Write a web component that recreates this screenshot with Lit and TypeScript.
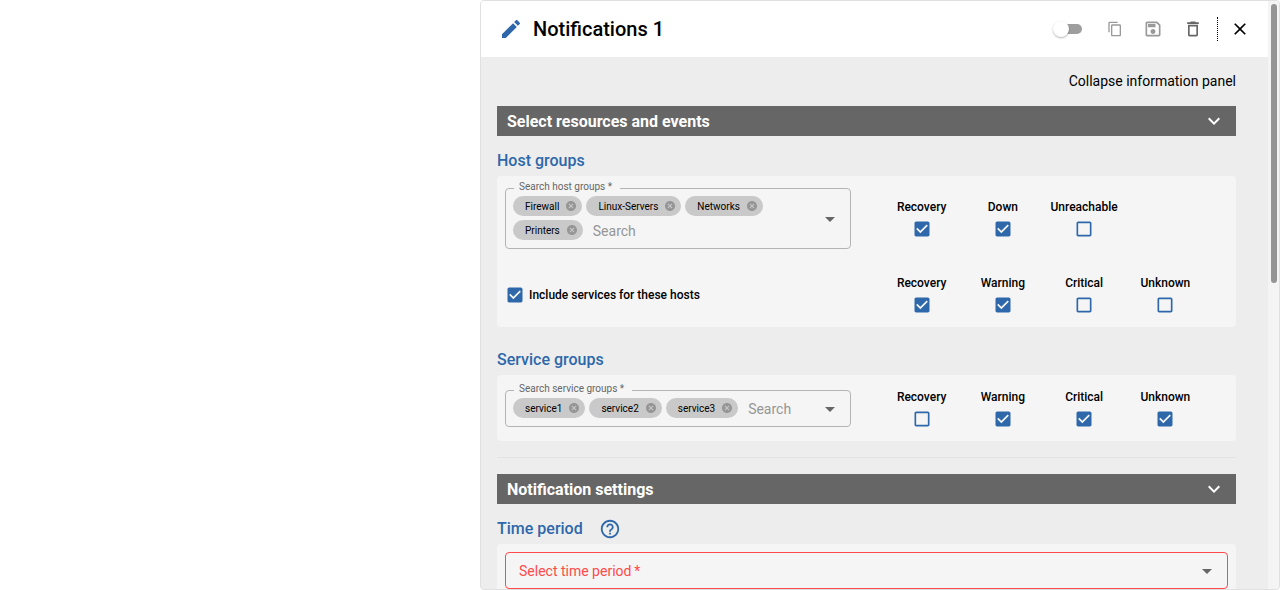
import { LitElement, html, css, svg, nothing } from "lit";
import { customElement, property, state } from "lit/decorators.js";

const ICONS = {
  edit: "M3 17.25V21h3.75L17.81 9.94l-3.75-3.75L3 17.25zM20.71 7.04c.39-.39.39-1.02 0-1.41l-2.34-2.34a.9959.9959 0 0 0-1.41 0l-1.83 1.83 3.75 3.75 1.83-1.83z",
  copy: "M16 1H4c-1.1 0-2 .9-2 2v14h2V3h12V1zm3 4H8c-1.1 0-2 .9-2 2v14c0 1.1.9 2 2 2h11c1.1 0 2-.9 2-2V7c0-1.1-.9-2-2-2zm0 16H8V7h11v14z",
  save: "M17 3H5c-1.11 0-2 .9-2 2v14c0 1.1.89 2 2 2h14c1.1 0 2-.9 2-2V7l-4-4zm2 16H5V5h11.17L19 7.83V19zm-7-7c-1.66 0-3 1.34-3 3s1.34 3 3 3 3-1.34 3-3-1.34-3-3-3zM6 6h9v4H6z",
  trash: "M6 19c0 1.1.9 2 2 2h8c1.1 0 2-.9 2-2V7H6v12zM8 9h8v10H8V9zm7.5-5-1-1h-5l-1 1H5v2h14V4z",
  close: "M19 6.41 17.59 5 12 10.59 6.41 5 5 6.41 10.59 12 5 17.59 6.41 19 12 13.41 17.59 19 19 17.59 13.41 12z",
  chevron: "M7.41 8.59 12 13.17l4.59-4.58L18 10l-6 6-6-6 1.41-1.41z",
  arrow: "M7 10l5 5 5-5z",
  cancel: "M12 2C6.47 2 2 6.47 2 12s4.47 10 10 10 10-4.47 10-10S17.53 2 12 2zm5 13.59L15.59 17 12 13.41 8.41 17 7 15.59 10.59 12 7 8.41 8.41 7 12 10.59 15.59 7 17 8.41 13.41 12 17 15.59z",
  help: "M11 18h2v-2h-2v2zm1-16C6.48 2 2 6.48 2 12s4.48 10 10 10 10-4.48 10-10S17.52 2 12 2zm0 18c-4.41 0-8-3.59-8-8s3.59-8 8-8 8 3.59 8 8-3.59 8-8 8zm0-14c-2.21 0-4 1.79-4 4h2c0-1.1.9-2 2-2s2 .9 2 2c0 2-3 1.75-3 5h2c0-2.25 3-2.5 3-5 0-2.21-1.79-4-4-4z",
};

type IconName = keyof typeof ICONS;

const icon = (name: IconName, size: number) => html`
  <svg class="icon" width=${size} height=${size} viewBox="0 0 24 24" aria-hidden="true">
    ${svg`<path d=${ICONS[name]}></path>`}
  </svg>`;

const shared = css`
  * {
    box-sizing: border-box;
  }
  button,
  input,
  select {
    margin: 0;
    padding: 0;
    border: 0;
    background: none;
    font: inherit;
    color: inherit;
  }
  button {
    display: inline-flex;
    align-items: center;
    justify-content: center;
    cursor: pointer;
  }
  .icon {
    display: block;
    flex: none;
    fill: currentColor;
  }
  .check {
    appearance: none;
    flex: none;
    width: 20px;
    height: 20px;
    background: center / 20px 20px no-repeat
      url("data:image/svg+xml,%3Csvg xmlns='http://www.w3.org/2000/svg' viewBox='0 0 24 24'%3E%3Cpath fill='%232e68aa' d='M19 5v14H5V5h14m0-2H5c-1.1 0-2 .9-2 2v14c0 1.1.9 2 2 2h14c1.1 0 2-.9 2-2V5c0-1.1-.9-2-2-2z'/%3E%3C/svg%3E");
  }
  .check:checked {
    background-image: url("data:image/svg+xml,%3Csvg xmlns='http://www.w3.org/2000/svg' viewBox='0 0 24 24'%3E%3Cpath fill='%232e68aa' d='M19 3H5c-1.11 0-2 .9-2 2v14c0 1.1.89 2 2 2h14c1.11 0 2-.9 2-2V5c0-1.1-.89-2-2-2zm-9 14l-5-5 1.41-1.41L10 14.17l7.59-7.59L19 8l-9 9z'/%3E%3C/svg%3E");
  }
`;

@customElement("section-bar")
class SectionBar extends LitElement {
  static styles = [
    shared,
    css`
      :host {
        display: block;
      }
      .title {
        margin: 0;
        font-size: 16px;
        font-weight: 700;
      }
      .bar {
        display: flex;
        justify-content: space-between;
        width: 100%;
        height: 30px;
        padding: 0 10px;
        background: #666;
        color: #fff;
      }
    `,
  ];

  @property() label = "";

  render() {
    return html`<h2 class="title">
      <button class="bar" type="button" aria-expanded="true">
        <span>${this.label}</span>${icon("chevron", 24)}
      </button>
    </h2>`;
  }
}

@customElement("tag-field")
class TagField extends LitElement {
  static styles = [
    shared,
    css`
      :host {
        display: block;
        min-width: 0;
      }
      .field {
        position: relative;
        display: flex;
        align-items: center;
        padding: 7px 8px 7px 7px;
        border: 1px solid #b4b4b4;
        border-radius: 4px;
      }
      .caption {
        position: absolute;
        top: -8px;
        left: 8px;
        padding: 0 8px 0 5px;
        background: #f5f5f5;
        color: #666;
        font-size: 10px;
        line-height: 12px;
      }
      .tags {
        flex: 1;
        min-width: 0;
        display: flex;
        flex-wrap: wrap;
        gap: 4px;
      }
      .tag {
        display: flex;
        align-items: center;
        gap: 6px;
        height: 20px;
        padding: 0 5px 0 12px;
        border-radius: 10px;
        background: #c9c9c9;
        font-size: 10px;
      }
      .remove {
        color: #959595;
      }
      .search {
        flex: 1 1 60px;
        min-width: 60px;
        width: 0;
        height: 21px;
        padding-left: 6px;
        font-size: 14px;
        outline: none;
      }
      .search::placeholder {
        color: #959595;
        opacity: 1;
      }
      .toggle {
        height: 20px;
        color: #666;
      }
    `,
  ];

  @property() label = "";
  @property({ attribute: false }) tags: string[] = [];

  private remove(tag: string) {
    this.tags = this.tags.filter((t) => t !== tag);
  }

  render() {
    return html`<div class="field">
      <label class="caption" for="search">${this.label}&nbsp;*</label>
      <div class="tags">
        ${this.tags.map(
          (tag) => html`<span class="tag">
            ${tag}
            <button class="remove" type="button" aria-label="Remove ${tag}" @click=${() => this.remove(tag)}>
              ${icon("cancel", 12)}
            </button>
          </span>`
        )}
        <input class="search" id="search" type="text" placeholder="Search" />
      </div>
      <button class="toggle" type="button" aria-label="Open">${icon("arrow", 24)}</button>
    </div>`;
  }
}

type EventOption = [name: string, checked: boolean];

@customElement("event-options")
class EventOptions extends LitElement {
  static styles = [
    shared,
    css`
      :host {
        display: block;
      }
      .options {
        display: grid;
        grid-template-columns: repeat(4, 1fr);
        padding-bottom: 1px;
      }
      .option {
        display: flex;
        flex-direction: column;
        align-items: center;
        gap: 2px;
        font-size: 12px;
        font-weight: 500;
        line-height: 20px;
      }
    `,
  ];

  @property({ attribute: false }) options: EventOption[] = [];

  render() {
    return html`<div class="options">
      ${this.options.map(
        ([name, checked]) => html`<label class="option">
          ${name}
          <input class="check" type="checkbox" .checked=${checked} />
        </label>`
      )}
    </div>`;
  }
}

@customElement("app-root")
class AppRoot extends LitElement {
  static styles = [
    shared,
    css`
      :host {
        display: flex;
        justify-content: flex-end;
        height: 100vh;
        background: #fff;
        color: #000;
        font-family: Roboto, "Liberation Sans", sans-serif;
        font-size: 14px;
      }
      .panel {
        display: flex;
        width: 62.5%;
        border: 1px solid #e0e0e0;
        border-radius: 4px;
        background: #ededed;
        overflow: hidden;
      }
      .content {
        flex: 1;
        min-width: 0;
        overflow-y: auto;
        scrollbar-width: none;
      }
      .rail {
        flex: none;
        width: 11px;
        padding: 3px 2px 3px 3px;
        background: #f4f4f4;
      }
      .thumb {
        height: 48%;
        border-radius: 3px;
        background: #959595;
      }
      .header {
        display: flex;
        align-items: center;
        gap: 10px;
        height: 56px;
        padding: 0 18px;
        background: #fff;
      }
      .edit {
        color: #2e68aa;
      }
      .name {
        flex: 1;
        margin: 0;
        font-size: 20px;
        font-weight: 500;
      }
      .actions {
        display: flex;
        align-items: center;
        gap: 16px;
      }
      .action {
        width: 24px;
        height: 24px;
        color: #666;
      }
      .action:disabled {
        color: #999;
      }
      .dismiss,
      .duplicate {
        width: 20px;
      }
      .dismiss {
        color: #000;
      }
      .divider {
        height: 24px;
        margin: 0 -4px;
        border-left: 1px dotted #000;
      }
      .switch {
        appearance: none;
        display: flex;
        align-items: center;
        width: 26px;
        height: 10px;
        margin-right: 7px;
        border-radius: 5px;
        background: #9e9e9e;
      }
      .switch::before {
        content: "";
        width: 16px;
        height: 16px;
        margin-left: -3px;
        border-radius: 50%;
        background: #fff;
        box-shadow: 0 1px 2px rgba(0, 0, 0, 0.3);
      }
      .switch:checked {
        justify-content: flex-end;
      }
      .body {
        padding: 16px 32px 16px 16px;
      }
      .collapse {
        display: flex;
        margin: 0 0 16px auto;
        line-height: 17px;
      }
      .heading {
        display: flex;
        align-items: center;
        gap: 16px;
        margin: 9px 0 0;
        color: #2e68aa;
        font-size: 16px;
        font-weight: 500;
        line-height: 31px;
      }
      .card + .heading {
        margin-top: 17px;
      }
      .card {
        display: grid;
        grid-template-columns: minmax(0, 1fr) 325px;
        align-items: center;
        gap: 24px 30px;
        padding: 12px 30px 11px 8px;
        border-radius: 4px;
        background: #f5f5f5;
      }
      .include {
        display: flex;
        align-items: center;
        gap: 4px;
        font-size: 12px;
        font-weight: 500;
      }
      .rule {
        height: 1px;
        margin: 16px 0;
        border: 0;
        background: #e3e3e3;
      }
      .single {
        display: block;
        padding: 8px;
      }
      .period {
        display: flex;
        align-items: center;
        position: relative;
        color: #666;
      }
      .select {
        appearance: none;
        width: 100%;
        height: 37px;
        padding: 0 13px;
        border: 1px solid #ff4a4a;
        border-radius: 4px;
        color: #ff4a4a;
      }
      .arrow {
        position: absolute;
        right: 9px;
        pointer-events: none;
      }
    `,
  ];

  @state() private expanded = true;

  render() {
    return html`<main class="panel">
      <div class="content">
        <header class="header">
          <span class="edit">${icon("edit", 24)}</span>
          <h1 class="name">Notifications 1</h1>
          <div class="actions">
            <input class="switch" type="checkbox" role="switch" aria-label="Active" />
            <button class="action duplicate" type="button" aria-label="Duplicate" disabled>${icon("copy", 16)}</button>
            <button class="action" type="button" aria-label="Save" disabled>${icon("save", 20)}</button>
            <button class="action" type="button" aria-label="Delete">${icon("trash", 20)}</button>
            <span class="divider"></span>
            <button class="action dismiss" type="button" aria-label="Close">${icon("close", 20)}</button>
          </div>
        </header>
        <div class="body">
          <button class="collapse" type="button" @click=${() => (this.expanded = !this.expanded)}>
            ${this.expanded ? "Collapse" : "Expand"} information panel
          </button>
          ${this.expanded ? this.renderSections() : nothing}
        </div>
      </div>
      <div class="rail" aria-hidden="true"><div class="thumb"></div></div>
    </main>`;
  }

  private renderSections() {
    return html`
      <section-bar label="Select resources and events"></section-bar>
      <h3 class="heading">Host groups</h3>
      <div class="card">
        <tag-field label="Search host groups" .tags=${["Firewall", "Linux-Servers", "Networks", "Printers"]}></tag-field>
        <event-options .options=${[["Recovery", true], ["Down", true], ["Unreachable", false]]}></event-options>
        <label class="include">
          <input class="check" type="checkbox" .checked=${true} />
          Include services for these hosts
        </label>
        <event-options
          .options=${[["Recovery", true], ["Warning", true], ["Critical", false], ["Unknown", false]]}
        ></event-options>
      </div>
      <h3 class="heading">Service groups</h3>
      <div class="card">
        <tag-field label="Search service groups" .tags=${["service1", "service2", "service3"]}></tag-field>
        <event-options
          .options=${[["Recovery", false], ["Warning", true], ["Critical", true], ["Unknown", true]]}
        ></event-options>
      </div>
      <hr class="rule" />
      <section-bar label="Notification settings"></section-bar>
      <h3 class="heading">Time period ${icon("help", 22)}</h3>
      <div class="card single">
        <div class="period">
          <select class="select" aria-label="Time period" required>
            <option value="">Select time period&thinsp;*</option>
          </select>
          <span class="arrow">${icon("arrow", 24)}</span>
        </div>
      </div>
    `;
  }
}
